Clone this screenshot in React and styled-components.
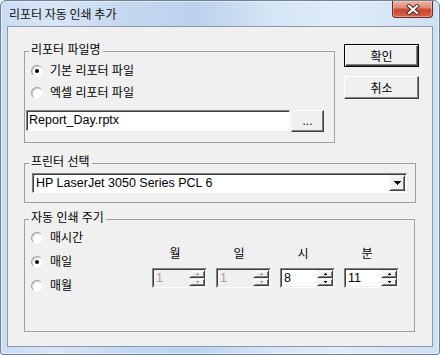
import React from "react";
import styled, { createGlobalStyle, css } from "styled-components";

const GlobalStyle = createGlobalStyle`
  html, body {
    margin: 0;
    padding: 0;
    background: #fff;
  }
  body {
    font-family: "Liberation Sans", "Noto Sans CJK KR", sans-serif;
    font-size: 12px;
    color: #000;
  }
`;

const Window = styled.div`
  width: 440px;
  height: 355px;
  box-sizing: border-box;
  display: flex;
  flex-direction: column;
  padding: 0 6px 7px 6px;
  border: 1px solid #6e8096;
  border-radius: 6px 6px 3px 3px;
  box-shadow: inset 0 0 0 1px rgba(255, 255, 255, 0.55);
  background: linear-gradient(
    to right,
    #c9dcf2 0%,
    #d8e6f6 12%,
    #c4d8ef 28%,
    #bcd2ec 45%,
    #d6e5f6 62%,
    #dfebf8 78%,
    #cfe0f3 100%
  );
`;

const TitleBar = styled.div`
  height: 25px;
  display: flex;
  align-items: flex-start;
  padding-left: 2px;
`;

const Title = styled.div`
  font-family: "Noto Sans CJK KR", sans-serif;
  font-size: 12px;
  line-height: 14px;
  margin-top: 6px;
  color: #111;
`;

const CloseButton = styled.div`
  margin-left: auto;
  width: 41px;
  height: 17px;
  box-sizing: border-box;
  border: 1px solid #6a2b22;
  border-top: none;
  border-radius: 0 0 4px 4px;
  background: linear-gradient(#eeb4a6 0%, #de8e7b 40%, #c7442c 55%, #d4654c 100%);
  box-shadow: inset 0 0 0 1px rgba(255, 220, 210, 0.45);
  display: flex;
  align-items: center;
  justify-content: center;
`;

const Client = styled.div`
  flex: 1;
  background: #f0f0f0;
  border: 1px solid #8a99ad;
  padding: 17px 0 0 16px;
  display: flex;
  flex-direction: column;
  align-items: flex-start;
`;

const TopRow = styled.div`
  display: flex;
  align-items: flex-start;
`;

const Group = styled.div`
  position: relative;
  box-sizing: border-box;
  width: ${(p) => p.$w}px;
  height: ${(p) => p.$h}px;
  margin-top: ${(p) => p.$mt || 0}px;
  border: 1px solid #a0a0a0;
`;

const Caption = styled.span`
  position: absolute;
  top: -9px;
  left: 4px;
  padding: 0 2px;
  background: #f0f0f0;
  line-height: 14px;
  white-space: nowrap;
`;

const ButtonColumn = styled.div`
  display: flex;
  flex-direction: column;
  gap: 9px;
  margin-left: 9px;
`;

const PushButton = styled.button`
  width: ${(p) => p.$w || 75}px;
  height: ${(p) => p.$h || 23}px;
  box-sizing: border-box;
  margin: 0;
  padding: 0 0 1px 0;
  font-family: "Liberation Sans", "Noto Sans CJK KR", sans-serif;
  font-size: 12px;
  color: #000;
  background: #f0f0f0;
  border: 1px solid;
  border-color: #fff #404040 #404040 #fff;
  box-shadow: inset -1px -1px 0 #808080;
  ${(p) =>
    p.$default &&
    css`
      border-color: #000;
      box-shadow: inset 1px 1px 0 #fff, inset -1px -1px 0 #404040,
        inset -2px -2px 0 #808080;
    `}
`;

const FileBody = styled.div`
  padding: 11px 0 0 6px;
  display: flex;
  flex-direction: column;
  gap: 6px;
`;

const RadioList = styled.div`
  display: flex;
  flex-direction: column;
  gap: ${(p) => p.$gap}px;
  padding: ${(p) => p.$top}px 0 0 6px;
`;

const RadioRow = styled.label`
  display: flex;
  align-items: center;
  gap: 7px;
  height: 16px;
  line-height: 16px;
  white-space: nowrap;
`;

const RadioMark = styled.span`
  position: relative;
  width: 12px;
  height: 12px;
  box-sizing: border-box;
  border-radius: 50%;
  background: #fff;
  border: 1px solid;
  border-color: #a0a0a0 #f4f4f4 #f4f4f4 #a0a0a0;
  box-shadow: inset 1px 1px 0 #d0d0d0;
  flex-shrink: 0;
  ${(p) =>
    p.$on &&
    css`
      &::after {
        content: "";
        position: absolute;
        left: 3px;
        top: 3px;
        width: 4px;
        height: 4px;
        border-radius: 50%;
        background: #000;
      }
    `}
`;

const FileRow = styled.div`
  display: flex;
  align-items: flex-start;
  gap: 1px;
  margin: 9px 0 0 1px;
`;

const Sunken = styled.div`
  box-sizing: border-box;
  border: 1px solid;
  border-color: #808080 #fff #fff #808080;
  box-shadow: inset 1px 1px 0 #404040;
  background: #fff;
`;

const TextInput = styled(Sunken)`
  width: 264px;
  height: 21px;
  padding-left: 2px;
  font-size: 12.5px;
  line-height: 19px;
  white-space: nowrap;
`;

const PrinterBody = styled.div`
  padding: 9px 0 0 7px;
`;

const Combo = styled(Sunken)`
  width: 375px;
  height: 20px;
  display: flex;
  align-items: center;
  padding: 1px 1px 1px 3px;
`;

const ComboText = styled.span`
  flex: 1;
  font-size: 12.5px;
  line-height: 16px;
  white-space: nowrap;
`;

const RaisedBox = styled.div`
  box-sizing: border-box;
  background: #f0f0f0;
  border: 1px solid;
  border-color: #f0f0f0 #404040 #404040 #f0f0f0;
  box-shadow: inset 1px 1px 0 #fff, inset -1px -1px 0 #808080;
  display: flex;
  align-items: center;
  justify-content: center;
`;

const DropButton = styled(RaisedBox)`
  width: 16px;
  height: 16px;
`;

const ScheduleBody = styled.div`
  display: flex;
  align-items: flex-start;
`;

const ScheduleRadios = styled(RadioList)`
  width: 127px;
  box-sizing: border-box;
`;

const SpinGrid = styled.div`
  display: grid;
  grid-template-columns: repeat(4, 55px);
  column-gap: 9px;
  row-gap: 7px;
  padding-top: 27px;
`;

const SpinLabel = styled.div`
  text-align: center;
  padding-right: 9px;
  line-height: 14px;
`;

const SpinOuter = styled.div`
  width: 55px;
  height: 20px;
  box-sizing: border-box;
  display: flex;
  border: 1px solid;
  border-color: #808080 #fff #fff #808080;
`;

const SpinInner = styled.div`
  flex: 1;
  display: flex;
  border: 1px solid;
  border-color: #404040 #f0f0f0 #f0f0f0 #404040;
`;

const SpinField = styled.div`
  flex: 1;
  padding-left: 2px;
  font-size: 12.5px;
  line-height: 16px;
  background: ${(p) => (p.$disabled ? "#f0f0f0" : "#fff")};
  color: ${(p) => (p.$disabled ? "#a0a0a0" : "#000")};
`;

const SpinButtons = styled.div`
  width: 16px;
  display: flex;
  flex-direction: column;
`;

const SpinButton = styled(RaisedBox)`
  width: 16px;
  height: 8px;
`;

const Arrow = ({ dir, color, size = "small" }) => {
  if (size === "big") {
    return (
      <svg width="7" height="4" viewBox="0 0 7 4" shapeRendering="crispEdges">
        <path d="M0 0h7v1H0zM1 1h5v1H1zM2 2h3v1H2zM3 3h1v1H3z" fill={color} />
      </svg>
    );
  }
  const d =
    dir === "up"
      ? "M2 0h1v1H2zM1 1h3v1H1z"
      : "M1 0h3v1H1zM2 1h1v1H2z";
  return (
    <svg width="5" height="2" viewBox="0 0 5 2" shapeRendering="crispEdges">
      <path d={d} fill={color} />
    </svg>
  );
};

const Radio = ({ on, children }) => (
  <RadioRow>
    <RadioMark $on={on} />
    {children}
  </RadioRow>
);

const Spinner = ({ value, disabled }) => {
  const c = disabled ? "#a0a0a0" : "#000";
  return (
    <SpinOuter>
      <SpinInner>
        <SpinField $disabled={disabled}>{value}</SpinField>
        <SpinButtons>
          <SpinButton>
            <Arrow dir="up" color={c} />
          </SpinButton>
          <SpinButton>
            <Arrow dir="down" color={c} />
          </SpinButton>
        </SpinButtons>
      </SpinInner>
    </SpinOuter>
  );
};

const spinners = [
  { label: "월", value: "1", disabled: true },
  { label: "일", value: "1", disabled: true },
  { label: "시", value: "8" },
  { label: "분", value: "11" },
];

export default function App() {
  return (
    <>
      <GlobalStyle />
      <Window>
        <TitleBar>
          <Title>리포터 자동 인쇄 추가</Title>
          <CloseButton>
            <svg width="14" height="11" viewBox="0 0 14 11">
              <path d="M3 2L11 9M11 2L3 9" stroke="#4a2420" strokeWidth="4" strokeLinecap="square" />
              <path d="M3 2L11 9M11 2L3 9" stroke="#fff" strokeWidth="2.2" strokeLinecap="square" />
            </svg>
          </CloseButton>
        </TitleBar>
        <Client>
          <TopRow>
            <Group $w={311} $h={92} $mt={7}>
              <Caption>리포터 파일명</Caption>
              <FileBody>
                <Radio on>기본 리포터 파일</Radio>
                <Radio>엑셀 리포터 파일</Radio>
              </FileBody>
              <FileRow>
                <TextInput>Report_Day.rptx</TextInput>
                <PushButton $w={33} $h={22}>...</PushButton>
              </FileRow>
            </Group>
            <ButtonColumn>
              <PushButton $default>확인</PushButton>
              <PushButton>취소</PushButton>
            </ButtonColumn>
          </TopRow>

          <Group $w={392} $h={40} $mt={20}>
            <Caption>프린터 선택</Caption>
            <PrinterBody>
              <Combo>
                <ComboText>HP LaserJet 3050 Series PCL 6</ComboText>
                <DropButton>
                  <Arrow size="big" color="#000" />
                </DropButton>
              </Combo>
            </PrinterBody>
          </Group>

          <Group $w={391} $h={113} $mt={16}>
            <Caption>자동 인쇄 주기</Caption>
            <ScheduleBody>
              <ScheduleRadios $gap={8} $top={10}>
                <Radio>매시간</Radio>
                <Radio on>매일</Radio>
                <Radio>매월</Radio>
              </ScheduleRadios>
              <SpinGrid>
                {spinners.map((s) => (
                  <SpinLabel key={s.label}>{s.label}</SpinLabel>
                ))}
                {spinners.map((s) => (
                  <Spinner key={s.label + "-spin"} value={s.value} disabled={s.disabled} />
                ))}
              </SpinGrid>
            </ScheduleBody>
          </Group>
        </Client>
      </Window>
    </>
  );
}
